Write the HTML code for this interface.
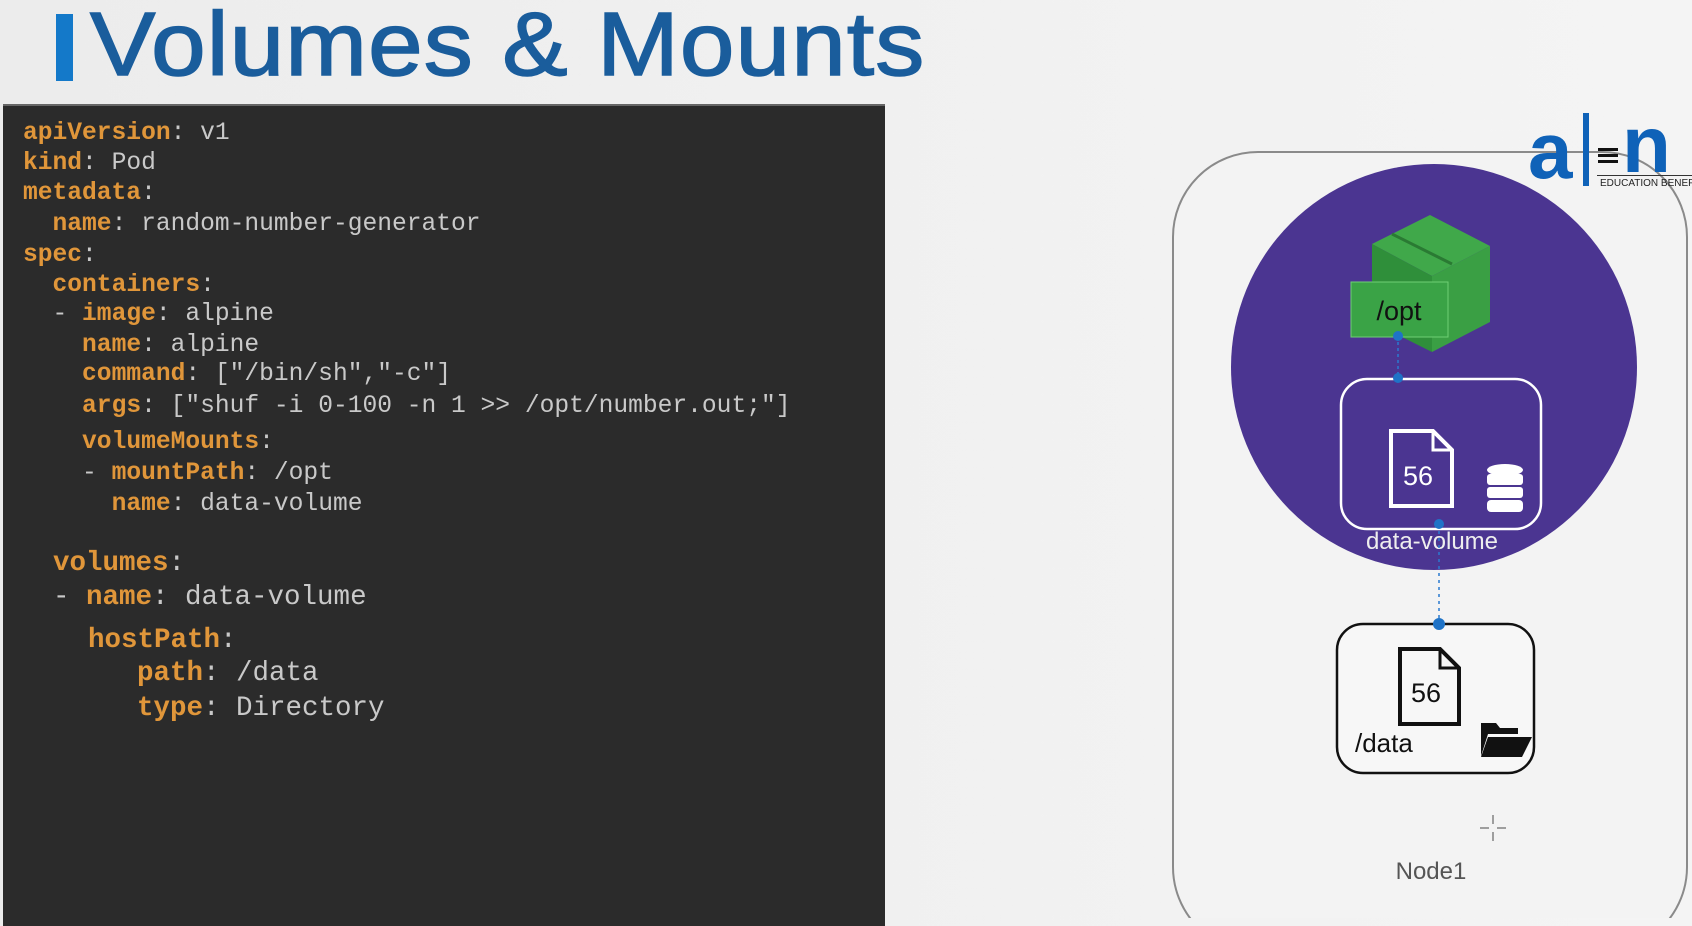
<!DOCTYPE html>
<html><head><meta charset="utf-8"><style>
html,body{margin:0;padding:0}
body{width:1692px;height:918px;overflow:hidden;position:relative;background:linear-gradient(90deg,#ececec 0%,#f1f1f1 60%,#f4f4f4 100%);font-family:"Liberation Sans",sans-serif}
.bar{position:absolute;left:56px;top:14px;width:17px;height:67px;background:#1479c9}
.title{position:absolute;left:90px;top:-6px;font-size:90px;color:#1a5d9c;letter-spacing:1px;white-space:nowrap;transform:scaleX(1.09);transform-origin:left;-webkit-text-stroke:1.5px #1a5d9c}
.code{position:absolute;left:3px;top:104px;width:882px;height:820px;background:#2b2b2b;border-top:2px solid #666}
.l{position:absolute;font-family:"Liberation Mono",monospace;white-space:pre;color:#c9c9c9;line-height:1}
.l b{color:#e0963a}
.s{font-size:24.6px}
.g{font-size:27.5px}
</style></head><body>
<div class="bar"></div>
<div class="title">Volumes &amp; Mounts</div>
<div class="code"></div>
<div class="l s" style="left:23px;top:122px"><b>apiVersion</b>: v1</div>
<div class="l s" style="left:23px;top:152px"><b>kind</b>: Pod</div>
<div class="l s" style="left:23px;top:182px"><b>metadata</b>:</div>
<div class="l s" style="left:23px;top:213px">  <b>name</b>: random-number-generator</div>
<div class="l s" style="left:23px;top:244px"><b>spec</b>:</div>
<div class="l s" style="left:23px;top:274px">  <b>containers</b>:</div>
<div class="l s" style="left:23px;top:303px">  - <b>image</b>: alpine</div>
<div class="l s" style="left:23px;top:334px">    <b>name</b>: alpine</div>
<div class="l s" style="left:23px;top:363px">    <b>command</b>: ["/bin/sh","-c"]</div>
<div class="l s" style="left:23px;top:395px">    <b>args</b>: ["shuf -i 0-100 -n 1 &gt;&gt; /opt/number.out;"]</div>
<div class="l s" style="left:23px;top:431px">    <b>volumeMounts</b>:</div>
<div class="l s" style="left:23px;top:462px">    - <b>mountPath</b>: /opt</div>
<div class="l s" style="left:23px;top:493px">      <b>name</b>: data-volume</div>
<div class="l g" style="left:53px;top:550px"><b>volumes</b>:</div>
<div class="l g" style="left:53px;top:584px">- <b>name</b>: data-volume</div>
<div class="l g" style="left:88px;top:627px"><b>hostPath</b>:</div>
<div class="l g" style="left:137px;top:660px"><b>path</b>: /data</div>
<div class="l g" style="left:137px;top:695px"><b>type</b>: Directory</div>

<svg width="1692" height="918" style="position:absolute;left:0;top:0" xmlns="http://www.w3.org/2000/svg">
<rect x="1173" y="152" width="514" height="800" rx="85" fill="#f3f3f3" stroke="#8a8a8a" stroke-width="2"/>
<ellipse cx="1434" cy="367" rx="203" ry="203" fill="#4b3591"/>
<polygon points="1372,244 1430,215 1490,246 1432,276" fill="#40a84a"/>
<polygon points="1372,244 1432,276 1432,352 1372,322" fill="#2f8f3a"/>
<polygon points="1432,276 1490,246 1490,322 1432,352" fill="#3a9f44"/>
<line x1="1392" y1="234" x2="1452" y2="264" stroke="#2a7a33" stroke-width="3"/>
<rect x="1351" y="282" width="97" height="55" fill="#3aa346" stroke="#6fcf74" stroke-width="1"/>
<text x="1399" y="320" font-family="Liberation Sans" font-size="27" fill="#111" text-anchor="middle">/opt</text>
<line x1="1398" y1="336" x2="1398" y2="378" stroke="#2a7ad0" stroke-width="1.5" stroke-dasharray="3,3"/>
<circle cx="1398" cy="336" r="5" fill="#1f73c7"/>
<rect x="1341" y="379" width="200" height="150" rx="26" fill="none" stroke="#fff" stroke-width="2.5"/>
<circle cx="1398" cy="378" r="5" fill="#1f73c7"/>
<path d="M1391 431 H1433 L1452 450 V506 H1391 Z" fill="none" stroke="#fff" stroke-width="4"/>
<path d="M1433 431 V450 H1452" fill="none" stroke="#fff" stroke-width="3"/>
<text x="1418" y="485" font-family="Liberation Sans" font-size="27" fill="#fff" text-anchor="middle">56</text>
<g fill="#fff">
<ellipse cx="1505" cy="470" rx="18" ry="6"/>
<rect x="1487" y="474" width="36" height="11" rx="3"/>
<rect x="1487" y="487" width="36" height="11" rx="3"/>
<rect x="1487" y="500" width="36" height="12" rx="4"/>
</g>
<text x="1432" y="549" font-family="Liberation Sans" font-size="24" fill="#eee" text-anchor="middle">data-volume</text>
<line x1="1439" y1="524" x2="1439" y2="624" stroke="#2a7ad0" stroke-width="1.5" stroke-dasharray="3,4"/>
<circle cx="1439" cy="524" r="5" fill="#1f73c7"/>
<rect x="1337" y="624" width="197" height="149" rx="26" fill="#f7f7f7" stroke="#111" stroke-width="2.5"/>
<circle cx="1439" cy="624" r="6" fill="#1f73c7"/>
<path d="M1400 649 H1440 L1459 668 V724 H1400 Z" fill="none" stroke="#111" stroke-width="4"/>
<path d="M1440 649 V668 H1459" fill="none" stroke="#111" stroke-width="3"/>
<text x="1426" y="702" font-family="Liberation Sans" font-size="27" fill="#111" text-anchor="middle">56</text>
<text x="1355" y="752" font-family="Liberation Sans" font-size="26" fill="#111">/data</text>
<path d="M1481 723 H1496 L1500 728 H1518 V734 H1488 L1481 756 Z" fill="#111"/>
<path d="M1488 737 H1532 L1522 757 H1481 Z" fill="#111"/>
<g stroke="#666" stroke-width="1.2"><line x1="1493" y1="815" x2="1493" y2="824"/><line x1="1493" y1="832" x2="1493" y2="841"/><line x1="1480" y1="828" x2="1489" y2="828"/><line x1="1497" y1="828" x2="1506" y2="828"/></g>
<text x="1431" y="879" font-family="Liberation Sans" font-size="24" fill="#555" text-anchor="middle">Node1</text>
<text x="1528" y="178" font-family="Liberation Sans" font-size="80" font-weight="bold" fill="#0f62b8" letter-spacing="-4">a</text>
<rect x="1583" y="113" width="6" height="73" fill="#0f62b8"/>
<rect x="1598" y="148" width="20" height="3" fill="#111"/>
<rect x="1598" y="154" width="20" height="3" fill="#111"/>
<rect x="1598" y="160" width="20" height="3" fill="#111"/>
<text x="1622" y="172" font-family="Liberation Sans" font-size="80" font-weight="bold" fill="#0f62b8">n</text>
<rect x="1597" y="175" width="95" height="1" fill="#333"/>
<text x="1600" y="186" font-family="Liberation Sans" font-size="10" fill="#222">EDUCATION BENEF</text>
</svg>
</body></html>
